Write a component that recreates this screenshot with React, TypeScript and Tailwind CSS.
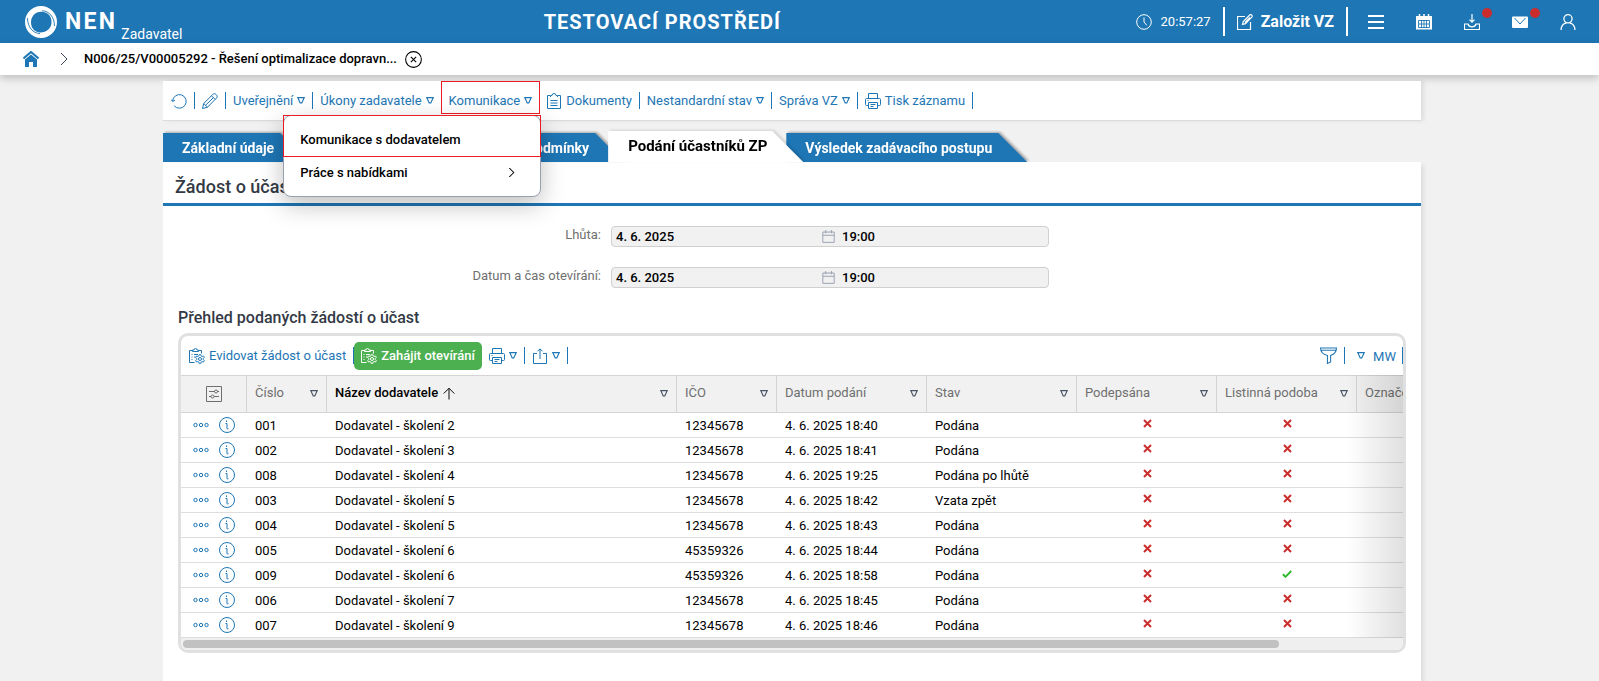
import type { ReactNode } from 'react';

interface IconProps {
  children: ReactNode;
  className?: string;
  strokeWidth?: number;
}

function Icon({ children, className = 'size-4', strokeWidth = 1 }: IconProps) {
  return (
    <svg
      className={`shrink-0 ${className}`}
      viewBox="0 0 16 16"
      fill="none"
      stroke="currentColor"
      strokeWidth={strokeWidth}
      aria-hidden="true"
    >
      {children}
    </svg>
  );
}

function Triangle() {
  return (
    <svg className="w-[8px] h-[7px] shrink-0" viewBox="0 0 8 7" fill="none" stroke="currentColor" aria-hidden="true">
      <path d="M.8.6h6.4L4.800 5.900H3.200z" strokeWidth={1.1} />
    </svg>
  );
}

function PrintIcon() {
  return (
    <Icon>
      <path d="M3.5 5.5v-5h9v5M3.5 12.5h-2a1 1 0 0 1-1-1v-5a1 1 0 0 1 1-1h13a1 1 0 0 1 1 1v5a1 1 0 0 1-1 1h-2" />
      <path d="M3.5 9.5h9v6h-9zM5.5 11.5h5M5.5 13.5h3M2.5 7.5h1" />
    </Icon>
  );
}

function ClipboardGearIcon() {
  return (
    <Icon>
      <path d="M5.5 14.5h-5v-12h3M9.5 2.5h3v3" />
      <path d="M3.5 3.5V2H5a1.500 1.500 0 0 1 3 0h1.500v1.500zM2.500 6.500h1M5 6.500h4M2.500 9h1M5 9h1.500M2.500 11.500h1" />
      <circle cx="11" cy="11" r="1.500" />
      <path d="M10.300 6.600h1.400l.4 1.300 1 .5 1.400-.4.8 1.300-1 1v1.400l1 1-.8 1.300-1.400-.4-1 .5-.4 1.300h-1.400l-.4-1.300-1-.5-1.400.4-.8-1.300 1-1v-1.400l-1-1 .8-1.300 1.400.4 1-.5z" />
    </Icon>
  );
}

function Divider() {
  return <span className="w-px h-[17px] bg-[#1e76b5] shrink-0" />;
}

interface ToolButtonProps {
  icon?: ReactNode;
  label?: string;
  menu?: boolean;
  name?: string;
}

function ToolButton({ icon, label, menu, name }: ToolButtonProps) {
  return (
    <button type="button" aria-label={name} className="flex items-center gap-1 px-[7px] h-8 whitespace-nowrap cursor-pointer">
      {icon}
      {label}
      {menu && <Triangle />}
    </button>
  );
}

function Header() {
  return (
    <header className="flex items-center h-[43px] bg-[#1e76b5] text-white">
      <a href="#" className="flex items-center w-[34%] pl-[25px]">
        <svg className="size-8 shrink-0" viewBox="0 0 32 32" aria-hidden="true">
          <path
            d="M16 0a16 16 0 1 1 0 32a16 16 0 1 1 0-32zM18 6C11 5 6 10 6 16.500S11 26.500 15 26.500C22 26.500 26.500 22 26.500 16S23 6.600 18 6z"
            fill="#fff"
            fillRule="evenodd"
          />
          <path d="M2.500 12C2.500 21 8 27.500 15 27.500" fill="none" stroke="#1e76b5" strokeWidth="0.900" />
          <path d="M29.500 20C29.500 11 24 4.800 17 4.800" fill="none" stroke="#1e76b5" strokeWidth="0.900" />
        </svg>
        <span className="ml-2 text-[23px] leading-8 font-bold tracking-widest">NEN</span>
        <span className="ml-1 mt-6 text-sm leading-5">Zadavatel</span>
      </a>
      <h1 className="text-xl font-bold tracking-wider whitespace-nowrap">TESTOVACÍ PROSTŘEDÍ</h1>
      <div className="flex items-center ml-auto pr-[7px]">
        <Icon>
          <circle cx="8" cy="8" r="7.300" />
          <path d="M8 3.500V8l2.800 3.300" />
        </Icon>
        <span className="ml-[9px] mr-3 text-[13px]">20:57:27</span>
        <span className="w-[2px] h-[29px] bg-white" />
        <button type="button" className="flex items-center gap-2 px-3 text-base font-bold whitespace-nowrap cursor-pointer">
          <Icon strokeWidth={1.2}>
            <path d="M8 2.500H.500v13h13V8" />
            <path d="M5.500 10.500l.8-3L13 .8c1.200-.8 2.800.8 2 2L8.500 9.700zM8 8.500l5-5" />
          </Icon>
          Založit VZ
        </button>
        <span className="w-[2px] h-[29px] bg-white mr-1" />
        <button type="button" aria-label="Menu" className="w-12 flex justify-center cursor-pointer">
          <Icon strokeWidth={2}>
            <path d="M0 2h16M0 8h16M0 14h16" />
          </Icon>
        </button>
        <button type="button" aria-label="Kalendář" className="w-12 flex justify-center cursor-pointer">
          <Icon>
            <path d="M0 2h16v13.500H0z" fill="currentColor" stroke="none" />
            <path d="M3.500 0v3M8 0v3M12.500 0v3" strokeWidth={1.500} />
            <path d="M2.500 6.500h11v7h-11zM2.500 10h11M5.500 6.500v7M8 6.500v7M10.500 6.500v7" stroke="#1e76b5" strokeWidth={0.9} />
          </Icon>
        </button>
        <button type="button" aria-label="Stahování" className="relative w-12 flex justify-center cursor-pointer">
          <Icon strokeWidth={1.2}>
            <path d="M8 0v8M5.500 5.700L8 8.200l2.500-2.500M.500 15.500v-5.500h3.500c.5 2 2 2.800 4 2.800s3.500-.8 4-2.800h3.500v5.500z" />
          </Icon>
          <span className="absolute -top-[6px] right-[4px] size-[10px] rounded-full bg-[#cb2c2c]" />
        </button>
        <button type="button" aria-label="Zprávy" className="relative w-12 flex justify-center cursor-pointer">
          <Icon>
            <rect x="0" y="2.500" width="16" height="11.500" rx="1" fill="currentColor" stroke="none" />
            <path d="M2.500 4l5.500 6 5.500-6" stroke="#1e76b5" />
          </Icon>
          <span className="absolute -top-[6px] right-[4px] size-[10px] rounded-full bg-[#cb2c2c]" />
        </button>
        <button type="button" aria-label="Uživatel" className="w-12 flex justify-center cursor-pointer">
          <Icon strokeWidth={1.3}>
            <circle cx="8" cy="4.800" r="4.100" />
            <path d="M1 16c0-4 2.500-6.500 5.500-7.200M15 16c0-4-2.500-6.500-5.500-7.200" />
          </Icon>
        </button>
      </div>
    </header>
  );
}

function Breadcrumb() {
  return (
    <nav className="relative flex items-center h-8 pl-[23px] bg-white text-black shadow-[0_3px_8px_rgba(0,0,0,0.22)]">
      <a href="#" aria-label="Domů" className="text-[#1e76b5]">
        <Icon>
          <path d="M.500 7.500L8 1l7.500 6.500" strokeWidth={2} />
          <path d="M2 8.500l6-5 6 5V16h-4v-5H6v5H2z" fill="currentColor" stroke="none" />
        </Icon>
      </a>
      <Icon className="size-3 ml-[19px] text-gray-700">
        <path d="M4 0l8 8-8 8" strokeWidth={1.300} />
      </Icon>
      <span className="ml-[14px] text-[13px] font-medium">N006/25/V00005292 - Řešení optimalizace dopravn...</span>
      <button type="button" aria-label="Zavřít" className="ml-2 cursor-pointer">
        <Icon className="size-[17px]">
          <circle cx="8" cy="8" r="7.400" />
          <path d="M5.500 5.500l5 5M10.500 5.500l-5 5" />
        </Icon>
      </button>
    </nav>
  );
}

function CommunicationMenu() {
  return (
    <div className="relative ml-px">
      <ToolButton label="Komunikace" menu />
      <span className="absolute -inset-x-px -top-1 h-[33px] border border-[#ec1c24] pointer-events-none" />
      <ul className="absolute z-20 -right-[2px] top-[30px] w-[258px] h-[82px] rounded-lg border border-gray-400 bg-white text-black text-[13px] font-medium shadow-[0_8px_24px_rgba(0,0,0,0.25)]">
        <li className="relative h-10">
          <span className="absolute -inset-px border border-[#ec1c24] pointer-events-none" />
          <button type="button" className="w-full h-full px-4 pt-2 text-left cursor-pointer">
            Komunikace s dodavatelem
          </button>
        </li>
        <li className="h-[34px]">
          <button type="button" className="flex items-center justify-between w-full h-full pl-4 pr-6 cursor-pointer">
            Práce s nabídkami
            <Icon className="size-[9px]" strokeWidth={1.800}>
              <path d="M4 0l8 8-8 8" />
            </Icon>
          </button>
        </li>
      </ul>
    </div>
  );
}

function Toolbar() {
  return (
    <div className="relative z-20 flex items-center h-10 pl-px bg-white border-b border-[#dcdcdc] text-[13px] text-[#1e76b5] shadow-[3px_0_4px_rgba(0,0,0,0.08)]">
      <ToolButton
        name="Obnovit"
        icon={
          <Icon>
            <path d="M1.600 8a6.800 6.800 0 1 1 1.600 4.800M0 6.500l1.700 2 2.300-1.500" />
          </Icon>
        }
      />
      <Divider />
      <ToolButton
        name="Upravit"
        icon={
          <Icon>
            <path d="M.500 15.500l1.200-5L11 1.200c1.800-1.800 5.500 1.500 3.700 3.700L5.500 14.200zM9.500 2.800l3.700 3.700M1.700 10.500l3.800 3.700" />
            <path d="M3.600 12.300l7.700-7.600" />
          </Icon>
        }
      />
      <Divider />
      <ToolButton label="Uveřejnění" menu />
      <Divider />
      <ToolButton label="Úkony zadavatele" menu />
      <CommunicationMenu />
      <ToolButton
        label="Dokumenty"
        icon={
          <Icon>
            <path d="M4 2.500H1.500v13h13v-13H12" />
            <path d="M4.500 4V2.500h1.500a2 2 0 0 1 4 0h1.500V4M4.500 7.500h7M4.500 10h7M4.500 12.500h7" />
          </Icon>
        }
      />
      <Divider />
      <ToolButton label="Nestandardní stav" menu />
      <Divider />
      <ToolButton label="Správa VZ" menu />
      <Divider />
      <ToolButton label="Tisk záznamu" icon={<PrintIcon />} />
      <Divider />
    </div>
  );
}

function Tab({ label, className = '', align = 'text-left' }: { label: string; className?: string; align?: string }) {
  return (
    <div className={`drop-shadow-[2px_-1px_1px_rgba(0,0,0,0.3)] ${className}`}>
      <button
        type="button"
        className={`h-[29px] w-full pl-[19px] pr-[35px] text-sm font-bold whitespace-nowrap bg-[#1e76b5] text-white [clip-path:polygon(0_0,calc(100%-29px)_0,100%_100%,0_100%)] cursor-pointer ${align}`}
      >
        {label}
      </button>
    </div>
  );
}

function Tabs() {
  return (
    <div className="flex items-end h-[41px]">
      <Tab label="Základní údaje" />
      <Tab label="Zadávací podmínky" className="w-[331px] -ml-4" align="text-right" />
      <div className="relative z-10 -ml-4 drop-shadow-[2px_-1px_1px_rgba(0,0,0,0.12)]">
        <button
          type="button"
          className="h-[31px] pl-5 pr-9 text-[15px] font-bold whitespace-nowrap bg-white text-black [clip-path:polygon(0_0,calc(100%-31px)_0,100%_100%,0_100%)] cursor-pointer"
        >
          Podání účastníků ZP
        </button>
      </div>
      <Tab label="Výsledek zadávacího postupu" className="-ml-[17px]" />
    </div>
  );
}

function DateField({ id, label }: { id: string; label: string }) {
  return (
    <div className="grid grid-cols-[438fr_438fr_362fr] gap-x-[10px] text-[13px]">
      <label htmlFor={id} className="text-right text-[#6f6f6f] leading-[18px]">
        {label}
      </label>
      <div className="flex items-center h-[21px] pl-1 rounded-sm border border-[#d0d0d0] bg-[#f1f1f1] font-medium text-black">
        <input id={id} readOnly defaultValue="4. 6. 2025" className="flex-1 min-w-0 outline-none" />
        <Icon className="size-[13px] text-gray-400" strokeWidth={1.2}>
          <path d="M1 2.500h14v12.700H1zM1 6.500h14M4.500 0v4M11.500 0v4" />
        </Icon>
        <input aria-label={`${label} čas`} readOnly defaultValue="19:00" className="flex-1 min-w-0 pl-[7px] outline-none" />
      </div>
    </div>
  );
}

const rows = [
  { id: '001', name: 'Dodavatel - školení 2', ico: '12345678', date: '4. 6. 2025 18:40', state: 'Podána', paper: false },
  { id: '002', name: 'Dodavatel - školení 3', ico: '12345678', date: '4. 6. 2025 18:41', state: 'Podána', paper: false },
  { id: '008', name: 'Dodavatel - školení 4', ico: '12345678', date: '4. 6. 2025 19:25', state: 'Podána po lhůtě', paper: false },
  { id: '003', name: 'Dodavatel - školení 5', ico: '12345678', date: '4. 6. 2025 18:42', state: 'Vzata zpět', paper: false },
  { id: '004', name: 'Dodavatel - školení 5', ico: '12345678', date: '4. 6. 2025 18:43', state: 'Podána', paper: false },
  { id: '005', name: 'Dodavatel - školení 6', ico: '45359326', date: '4. 6. 2025 18:44', state: 'Podána', paper: false },
  { id: '009', name: 'Dodavatel - školení 6', ico: '45359326', date: '4. 6. 2025 18:58', state: 'Podána', paper: true },
  { id: '006', name: 'Dodavatel - školení 7', ico: '12345678', date: '4. 6. 2025 18:45', state: 'Podána', paper: false },
  { id: '007', name: 'Dodavatel - školení 9', ico: '12345678', date: '4. 6. 2025 18:46', state: 'Podána', paper: false },
];

const columns = [
  { label: 'Číslo', width: 'w-[80px]' },
  { label: 'Název dodavatele', width: 'w-[350px]', sorted: true },
  { label: 'IČO', width: 'w-[100px]' },
  { label: 'Datum podání', width: 'w-[150px]' },
  { label: 'Stav', width: 'w-[150px]' },
  { label: 'Podepsána', width: 'w-[140px]' },
  { label: 'Listinná podoba', width: 'w-[140px]' },
  { label: 'Označení', width: 'w-[180px]' },
];

function Mark({ ok }: { ok: boolean }) {
  return ok ? (
    <svg className="w-[10px] h-2 mx-auto mb-[3px]" viewBox="0 0 10 8" fill="none" aria-label="Ano">
      <path d="M.8 4.300l2.700 2.500L9.200 1" stroke="#2eb82e" strokeWidth={1.900} />
    </svg>
  ) : (
    <svg className="size-[9px] mx-auto mb-[3px]" viewBox="0 0 9 9" fill="none" aria-label="Ne">
      <path d="M1 1l7 7M8 1L1 8" stroke="#cb2c2c" strokeWidth={2} />
    </svg>
  );
}

function RequestsTable() {
  return (
    <table className="w-[1356px] table-fixed border-separate border-spacing-0 text-[13px]">
      <thead>
        <tr className="bg-[#f1f1f1] text-[#6f6f6f]">
          <th className="w-[66px] h-[38px] border-y border-r border-[#d4d4d4]">
            <button type="button" aria-label="Nastavení sloupců" className="block mx-auto cursor-pointer">
              <Icon>
                <path d="M.500.500h15v15H.500zM3 5.500h6M11 5.500h2M3 10.500h2M8 10.500h5" />
                <circle cx="10" cy="5.500" r="1.500" />
                <circle cx="6.500" cy="10.500" r="1.500" />
              </Icon>
            </button>
          </th>
          {columns.map((c) => (
            <th key={c.label} className={`px-2 pb-[2px] border-y border-r border-[#d4d4d4] font-normal ${c.width}`}>
              <div className="flex items-center">
                <span className={c.sorted ? 'font-medium text-black' : 'whitespace-nowrap'}>{c.label}</span>
                {c.sorted && (
                  <Icon className="w-3 h-[13px] ml-[5px] text-black" strokeWidth={1.300}>
                    <path d="M8 16V1M1 8l7-7 7 7" />
                  </Icon>
                )}
                <span className="ml-auto text-gray-600">
                  <Triangle />
                </span>
              </div>
            </th>
          ))}
        </tr>
      </thead>
      <tbody className="text-black [&_td]:h-[25px] [&_td]:border-b [&_td]:border-[#dedede]">
        {rows.map((r) => (
          <tr key={r.id}>
            <td>
              <div className="flex items-center justify-center gap-[10px] text-[#1e76b5]">
                <button type="button" aria-label={`Akce ${r.id}`} className="cursor-pointer">
                  <Icon>
                    <circle cx="2.500" cy="8" r="1.700" />
                    <circle cx="8" cy="8" r="1.700" />
                    <circle cx="13.500" cy="8" r="1.700" />
                  </Icon>
                </button>
                <button type="button" aria-label={`Detail ${r.id}`} className="cursor-pointer">
                  <Icon>
                    <circle cx="8" cy="8" r="7.500" />
                    <path d="M6.500 6.500H8v5c0 .5.500.5 1.500.2M7.500 3.500v1.500" />
                  </Icon>
                </button>
              </div>
            </td>
            <td className="px-2 pt-[2px]">{r.id}</td>
            <td className="px-2 pt-[2px]">{r.name}</td>
            <td className="px-2 pt-[2px]">{r.ico}</td>
            <td className="px-2 pt-[2px]">{r.date}</td>
            <td className="px-2 pt-[2px]">{r.state}</td>
            <td>
              <Mark ok={false} />
            </td>
            <td>
              <Mark ok={r.paper} />
            </td>
            <td />
          </tr>
        ))}
      </tbody>
    </table>
  );
}

function Requests() {
  return (
    <section className="px-[15px]">
      <h3 className="mt-[18px] mb-[3px] text-base font-medium text-[#333a45]">Přehled podaných žádostí o účast</h3>
      <div className="relative overflow-hidden rounded-[10px] border-[3px] border-[#dfe0e1]">
        <div className="flex items-center h-[39px] pl-px text-[13px] text-[#1e76b5]">
          <ToolButton label="Evidovat žádost o účast" icon={<ClipboardGearIcon />} />
          <Divider />
          <button type="button" className="flex items-center gap-1 h-7 px-[7px] rounded-[5px] bg-[#4caf50] text-white font-medium cursor-pointer">
            <ClipboardGearIcon />
            Zahájit otevírání
          </button>
          <ToolButton name="Tisk" icon={<PrintIcon />} menu />
          <Divider />
          <ToolButton
            name="Export"
            menu
            icon={
              <Icon>
                <path d="M5 5.500H1.500v10h13v-10H11M8 11V1M5.500 3.300L8 .8l2.500 2.500" />
              </Icon>
            }
          />
          <Divider />
          <button type="button" aria-label="Filtr" className="ml-auto px-[7px] cursor-pointer">
            <Icon className="size-[17px]">
              <path d="M.500 1h15c0 4-2.500 6-5.500 7v6l-3 1.500V8C3 7 .500 5 .500 1zM1 3h14" />
            </Icon>
          </button>
          <Divider />
          <button type="button" className="flex items-center gap-2 pl-3 pr-[6px] cursor-pointer">
            <Triangle />
            <span className="pt-[2px]">MW</span>
          </button>
          <Divider />
        </div>
        <div className="relative overflow-hidden">
          <RequestsTable />
          <div className="absolute inset-y-0 right-0 w-14 bg-linear-to-r from-transparent to-black/12 pointer-events-none" />
        </div>
        <div className="h-3 px-[2px] py-[2px] bg-[#efefef]">
          <div className="h-2 w-[90%] rounded-full bg-[#c1c1c1]" />
        </div>
      </div>
    </section>
  );
}

export default function App() {
  return (
    <div className="flex flex-col min-h-screen bg-[#f1f1f1] font-['Roboto',sans-serif]">
      <Header />
      <Breadcrumb />
      <div className="flex flex-1 justify-center pt-[6px] pr-[15px]">
        <div className="flex flex-col w-full max-w-[1258px]">
          <Toolbar />
          <Tabs />
          <main className="flex-1 bg-white shadow-[3px_3px_4px_rgba(0,0,0,0.08)]">
            <h2 className="h-11 pl-3 pt-[11px] border-b-[3px] border-[#1e76b5] text-lg leading-7 font-medium text-[#333a45]">
              Žádost o účast
            </h2>
            <div className="flex flex-col gap-5 pt-5">
              <DateField id="deadline" label="Lhůta:" />
              <DateField id="opening" label="Datum a čas otevírání:" />
            </div>
            <Requests />
          </main>
        </div>
      </div>
    </div>
  );
}
